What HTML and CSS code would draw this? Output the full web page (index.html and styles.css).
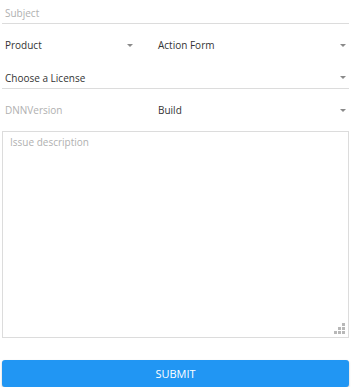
FILE: index.html
```html
<!DOCTYPE html>
<html lang="en">

<head>
	<meta charset="UTF-8">
	<meta name="viewport" content="width=device-width, initial-scale=1.0">
	<title>Support</title>
	<link rel="stylesheet" href="styles.css">
</head>

<body>
	<form class="ticket">
		<div class="field subject field__line">
			<span class="placeholder">Subject</span>
		</div>

		<div class="row">
			<div class="field select narrow">
				<span>Product</span>
				<i class="caret"></i>
			</div>
			<div class="field select">
				<span>Action Form</span>
				<i class="caret"></i>
			</div>
		</div>

		<div class="field select license field__line">
			<span>Choose a License</span>
			<i class="caret"></i>
		</div>

		<div class="row">
			<div class="field narrow">
				<span class="placeholder">DNNVersion</span>
			</div>
			<div class="field select">
				<span>Build</span>
				<i class="caret"></i>
			</div>
		</div>

		<div class="description">
			<span class="placeholder">Issue description</span>
			<svg class="grip" width="11" height="11" viewBox="0 0 11 11">
				<rect x="8" y="0" width="3" height="3" fill="#b8b8b8" />
				<rect x="4" y="4" width="3" height="3" fill="#b8b8b8" />
				<rect x="8" y="4" width="3" height="3" fill="#b8b8b8" />
				<rect x="0" y="8" width="3" height="3" fill="#b8b8b8" />
				<rect x="4" y="8" width="3" height="3" fill="#b8b8b8" />
				<rect x="8" y="8" width="3" height="3" fill="#b8b8b8" />
			</svg>
		</div>

		<button type="button" class="submit">SUBMIT</button>
	</form>
</body>

</html>
```

FILE: styles.css
```css
body {
	margin: 0;
	background: #fff;
	font-family: "Open Sans", "Noto Sans", sans-serif;
	font-size: 10px;
	color: #333;
}

.ticket {
	width: 347px;
	margin-left: 2px;
	display: flex;
	flex-direction: column;
}

.field {
	display: flex;
	align-items: center;
	padding: 0 3px 0 3px;
	box-sizing: border-box;
}

.field__line {
	border-bottom: 1px solid #dcdcdc;
}

.subject {
	height: 24px;
	padding-top: 2px;
}

.license {
	height: 23px;
	padding-top: 1px;
}

.row {
	display: flex;
	gap: 19px;
	height: 42px;
	align-items: center;
}

.row .field {
	flex: 1;
	height: 22px;
}

.row .narrow {
	flex: 0 0 134px;
}

.placeholder {
	color: #b0b0b0;
}

.select {
	justify-content: space-between;
}

.caret {
	width: 0;
	height: 0;
	border-left: 3px solid transparent;
	border-right: 3px solid transparent;
	border-top: 3px solid #8a8a8a;
}

.description {
	height: 207px;
	border: 1px solid #dcdcdc;
	box-sizing: border-box;
	padding: 3px 7px;
	position: relative;
}

.grip {
	position: absolute;
	right: 3px;
	bottom: 3px;
}

.submit {
	margin-top: 22px;
	height: 27px;
	border: none;
	border-radius: 3px;
	background: #2196f3;
	color: #fff;
	font-family: "Open Sans", "Noto Sans", sans-serif;
	font-size: 11px;
	box-shadow: 0 1px 2px rgba(0, 0, 0, 0.25);
}
```
